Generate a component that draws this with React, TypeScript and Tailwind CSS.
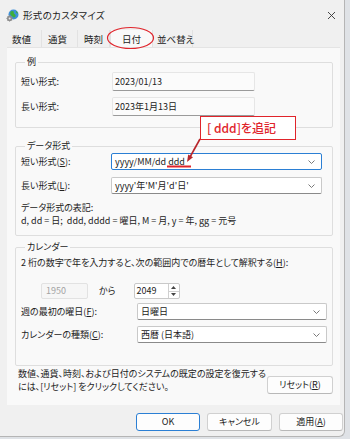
import type { ReactNode } from 'react';

const Chevron = () => (
    <svg width="7" height="4" viewBox="0 0 7 4" className="text-[#6b6b6b]">
        <path d="M0.5 0.5 L3.5 3.5 L6.5 0.5" fill="none" stroke="currentColor" strokeWidth="0.9" />
    </svg>
);

const Combo = ({ text, w, focused }: { text: ReactNode; w: string; focused?: boolean }) => (
    <div
        className={`${w} h-[17px] flex items-center justify-between pl-[3px] pr-[6px] bg-white rounded-[2px] border ${
            focused ? 'border-[#2b7fd4]' : 'border-[#c9c9c9] border-b-[#8a8a8a]'
        }`}
    >
        <span className="whitespace-nowrap">{text}</span>
        <Chevron />
    </div>
);

const ReadBox = ({ text }: { text: string }) => (
    <div className="w-[143px] h-[19px] flex items-center pl-[2px] bg-[#fbfbfb] border border-[#e6e6e6] border-b-[#9a9a9a] rounded-[2px]">
        {text}
    </div>
);

const Group = ({ label, className, children }: { label: string; className: string; children: ReactNode }) => (
    <fieldset className={`border border-[#dedede] rounded-[2px] px-[5px] ${className}`}>
        <legend className="ml-[4px] px-[2px] leading-[12px]">{label}</legend>
        {children}
    </fieldset>
);

const Btn = ({ children, w, primary }: { children: ReactNode; w: string; primary?: boolean }) => (
    <div
        className={`${w} h-[18px] flex items-center justify-center bg-[#fdfdfd] rounded-[3px] border ${
            primary ? 'border-[#2b7fd4]' : 'border-[#d0d0d0] border-b-[#b8b8b8]'
        }`}
    >
        {children}
    </div>
);

const GlobeIcon = () => (
    <svg width="13" height="13" viewBox="0 0 13 13">
        <circle cx="7.5" cy="5.5" r="5" fill="#3d8fd8" />
        <path d="M4.5 2.5 Q6.5 1.5 8 2.8 Q7 4.2 8.5 5 Q10 5.5 9.5 7.5 Q8 9 7 8 Q6 6.5 5 6.5 Q3.5 5.5 4.5 2.5Z" fill="#3fae3a" />
        <path d="M10 1.8 Q11.8 3 12 5 Q11 4 10 3.5Z" fill="#3fae3a" />
        <circle cx="3.6" cy="9.4" r="2.6" fill="#8d8d8d" />
        <circle cx="3.6" cy="9.4" r="1" fill="#e8e8e8" />
        <path d="M3.6 6.2 V7 M3.6 11.8 V12.6 M0.4 9.4 H1.2 M6 9.4 H6.8 M1.4 7.2 L1.9 7.7 M5.3 11.1 L5.8 11.6 M1.4 11.6 L1.9 11.1 M5.3 7.7 L5.8 7.2" stroke="#8d8d8d" strokeWidth="1" />
    </svg>
);

const tabs = [
    { label: '数値', cls: 'w-[35px] pl-[5px]' },
    { label: '通貨', cls: 'w-[36px] pl-[6px]' },
    { label: '時刻', cls: 'w-[32px] pl-[6px]' },
    { label: '日付', cls: 'w-[43px] pl-[11px]', active: true },
    { label: '並べ替え', cls: 'w-[40px] pl-[4px]' },
];

export default function App() {
    return (
        <div className="w-[350px] h-[439px] bg-[#dfe2e6] overflow-hidden [font-family:'Noto_Sans_CJK_JP',sans-serif] [font-feature-settings:'palt'] text-[9px] text-[#222] leading-[12px]">
            <div className="relative w-[345px] h-[437px] bg-[#f0f0f0] border-r border-b border-[#b5b5b5] rounded-br-[6px] flex flex-col">
                {/* Title bar */}
                <div className="h-[30px] flex items-center pl-[6px] pr-[8px]">
                    <GlobeIcon />
                    <span className="ml-[4px] text-[9.5px] tracking-[0.3px]">形式のカスタマイズ</span>
                    <svg className="ml-auto" width="9" height="9" viewBox="0 0 9 9">
                        <path d="M1 1 L8 8 M8 1 L1 8" stroke="#333" strokeWidth="0.9" />
                    </svg>
                </div>

                {/* Tabs */}
                <div className="h-[17px] flex pl-[7px] text-[9.5px]">
                    {tabs.map((t) => (
                        <div
                            key={t.label}
                            className={`${t.cls} flex items-center border-r border-[#e2e2e2] whitespace-nowrap ${
                                t.active ? 'bg-[#f9f9f9] border-l' : ''
                            }`}
                        >
                            {t.label}
                        </div>
                    ))}
                </div>

                {/* Panel */}
                <div className="mx-[7px] w-[333px] h-[358px] bg-[#f9f9f9] border-t border-[#e4e4e4] pt-[8px] pl-[8px] pr-[7px]">
                    <Group label="例" className="h-[72px]">
                        <div className="mt-[4px] flex items-center h-[19px]">
                            <span className="w-[91px]">短い形式:</span>
                            <ReadBox text="2023/01/13" />
                        </div>
                        <div className="mt-[6px] flex items-center h-[19px]">
                            <span className="w-[91px]">長い形式:</span>
                            <ReadBox text="2023年1月13日" />
                        </div>
                    </Group>

                    <Group label="データ形式" className="mt-[12px] h-[96px]">
                        <div className="mt-[1px] flex items-center">
                            <span className="w-[90px]">
                                短い形式(<span className="underline">S</span>):
                            </span>
                            <Combo w="w-[211px]" focused text="yyyy/MM/dd ddd" />
                        </div>
                        <div className="mt-[7px] flex items-center">
                            <span className="w-[90px]">
                                長い形式(<span className="underline">L</span>):
                            </span>
                            <Combo w="w-[211px]" text="yyyy'年'M'月'd'日'" />
                        </div>
                        <div className="mt-[8px]">データ形式の表記:</div>
                        <div className="leading-[13px] whitespace-pre">d, dd = 日;  ddd, dddd = 曜日, M = 月, y = 年, gg = 元号</div>
                    </Group>

                    <Group label="カレンダー" className="mt-[5px] h-[125px]">
                        <div className="mt-[4px] whitespace-nowrap">
                            2 桁の数字で年を入力すると、次の範囲内での暦年として解釈する(<span className="underline">H</span>):
                        </div>
                        <div className="mt-[14px] flex items-center h-[16px]">
                            <div className="ml-[20px] w-[47px] h-[16px] flex items-center pl-[4px] bg-[#f6f6f6] border border-[#e2e2e2] rounded-[2px] text-[#a3a3a3]">
                                1950
                            </div>
                            <span className="ml-[11px]">から</span>
                            <div className="ml-[18px] w-[46px] h-[16px] flex bg-white border border-[#c9c9c9] rounded-[2px]">
                                <span className="flex-1 pl-[2px] flex items-center">2049</span>
                                <div className="w-[11px] flex flex-col border-l border-[#d0d0d0]">
                                    <div className="flex-1 flex items-center justify-center border-b border-[#d0d0d0]">
                                        <svg width="5" height="3" viewBox="0 0 5 3"><path d="M0 3 L2.5 0 L5 3Z" fill="#444" /></svg>
                                    </div>
                                    <div className="flex-1 flex items-center justify-center">
                                        <svg width="5" height="3" viewBox="0 0 5 3"><path d="M0 0 L2.5 3 L5 0Z" fill="#444" /></svg>
                                    </div>
                                </div>
                            </div>
                        </div>
                        <div className="mt-[4px] flex items-center">
                            <span className="w-[116px]">
                                週の最初の曜日(<span className="underline">F</span>):
                            </span>
                            <Combo w="w-[190px]" text="日曜日" />
                        </div>
                        <div className="mt-[6px] flex items-center">
                            <span className="w-[116px]">
                                カレンダーの種類(<span className="underline">C</span>):
                            </span>
                            <Combo w="w-[190px]" text="西暦 (日本語)" />
                        </div>
                    </Group>

                    <div className="mt-[1px] flex items-start justify-between pl-[3px]">
                        <div className="leading-[13px]">
                            <div>数値、通貨、時刻、および日付のシステムの既定の設定を復元する</div>
                            <div>には、[リセット] をクリックしてください。</div>
                        </div>
                        <div className="mt-[9px]">
                            <Btn w="w-[66px]">
                                リセット(<span className="underline">R</span>)
                            </Btn>
                        </div>
                    </div>
                </div>

                {/* Buttons */}
                <div className="mt-[8px] flex pl-[136px] gap-[7px]">
                    <Btn w="w-[64px]" primary>OK</Btn>
                    <Btn w="w-[65px]">キャンセル</Btn>
                    <Btn w="w-[64px]">
                        適用(<span className="underline">A</span>)
                    </Btn>
                </div>

                {/* Annotations */}
                <svg className="absolute left-0 top-0 pointer-events-none" width="350" height="439">
                    <ellipse cx="130.5" cy="38" rx="23" ry="10.5" fill="none" stroke="#e0242b" strokeWidth="1.2" />
                    <line x1="200" y1="139" x2="190" y2="157" stroke="#b8262b" strokeWidth="1.6" />
                    <path d="M187 162 L188.2 154.5 L193 157.2Z" fill="#b8262b" />
                    <line x1="167" y1="166.5" x2="191" y2="166.5" stroke="#e0242b" strokeWidth="2" />
                </svg>
                <div className="absolute left-[200px] top-[116px] w-[96px] h-[24px] bg-white border border-[#e0242b] flex items-center pl-[6px] text-[#e0242b] text-[12px] font-medium whitespace-nowrap">
                    [ ddd]を追記
                </div>
            </div>
        </div>
    );
}
